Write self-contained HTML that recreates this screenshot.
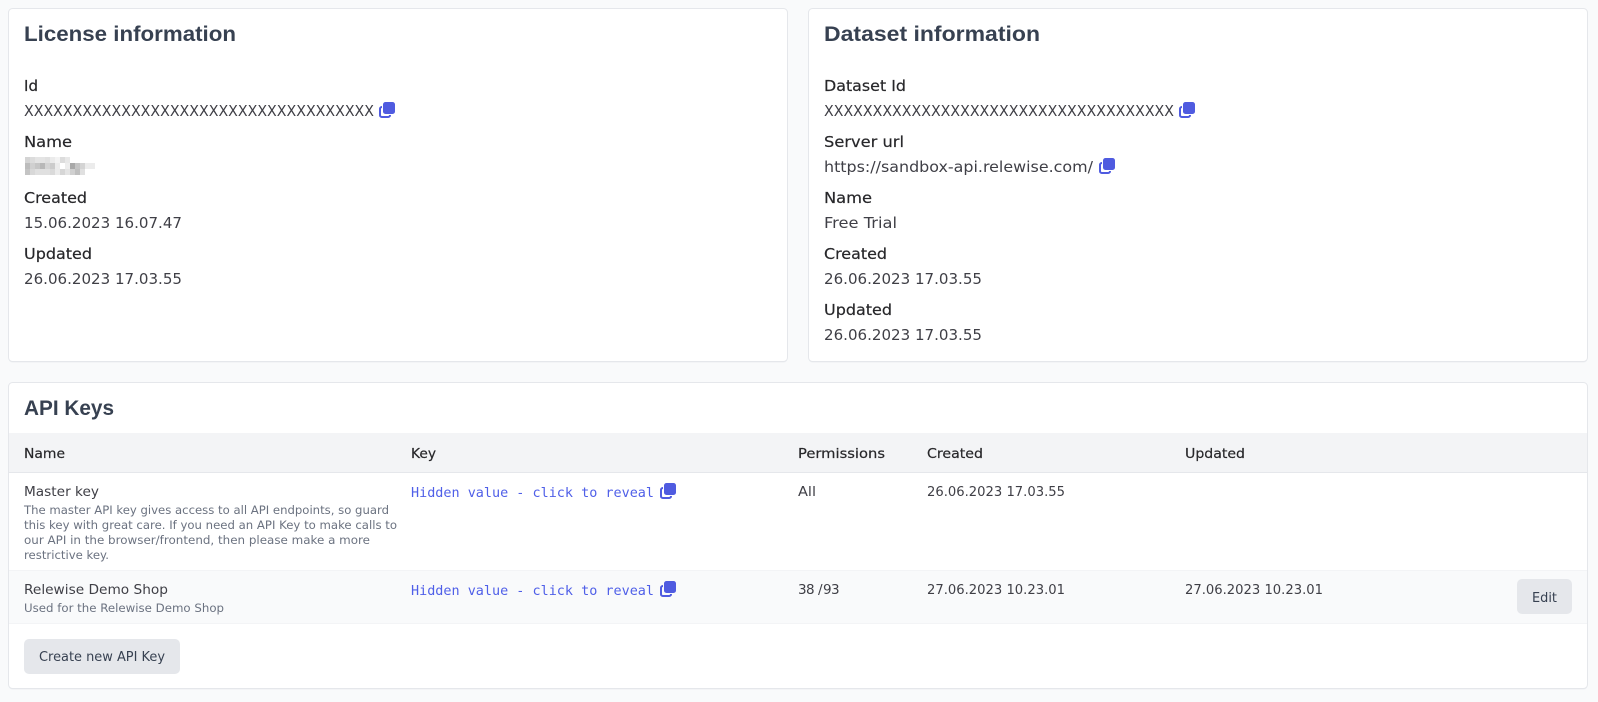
<!DOCTYPE html>
<html><head><meta charset="utf-8"><title>Settings</title>
<style>
html,body{margin:0;padding:0;background:#f9fafb;width:1598px;height:702px;overflow:hidden}
svg{display:block}
text{font-family:"DejaVu Sans","Liberation Sans",sans-serif;white-space:pre}
.h{font-family:"Liberation Sans",sans-serif;font-weight:700;font-size:21.5px;fill:#374151}
.l{font-size:15.5px;fill:#27272a;stroke:#27272a;stroke-width:.2}
.v{font-size:15.5px;fill:#3f3f46}
.th{font-size:13.5px;fill:#27272a;stroke:#27272a;stroke-width:.2}
.td{font-size:13.5px;fill:#3f3f46}
.d{font-size:11.5px;fill:#6b7280}
.m{font-family:"DejaVu Sans Mono","Liberation Mono",monospace;font-size:13.4px;fill:#4f5fe8}
.b{font-size:13.5px;fill:#374151}
.c{fill:#fff;stroke:#e5e7eb;stroke-width:1}
</style></head><body>
<svg width="1598" height="702" viewBox="0 0 1598 702" xmlns="http://www.w3.org/2000/svg">
<rect width="1598" height="702" fill="#f9fafb"/>
<rect x="8.5" y="9.5" width="779" height="353" rx="4" fill="#e5e7eb" opacity=".6"/>
<rect class="c" x="8.500" y="8.500" width="779" height="353" rx="4"/>
<rect x="808.500" y="9.500" width="779" height="353" rx="4" fill="#e5e7eb" opacity=".6"/>
<rect class="c" x="808.500" y="8.500" width="779" height="353" rx="4"/>
<rect x="8.500" y="383.500" width="1579" height="306" rx="4" fill="#e5e7eb" opacity=".6"/>
<rect class="c" x="8.500" y="382.500" width="1579" height="306" rx="4"/>

<text class="h" x="24" y="41" textLength="212" lengthAdjust="spacingAndGlyphs">License information</text>
<text class="l" x="24" y="91" textLength="14" lengthAdjust="spacingAndGlyphs">Id</text>
<text class="v" x="24" y="116" textLength="350" lengthAdjust="spacingAndGlyphs">XXXXXXXXXXXXXXXXXXXXXXXXXXXXXXXXXXXX</text>
<g transform="translate(379,102)"><rect x="4" y="0" width="12" height="12" rx="2.5" fill="#4f5be0"/><path d="M3 5H2.800A1.800 1.800 0 0 0 1 6.800V13.200A1.800 1.800 0 0 0 2.800 15H9.200A1.800 1.800 0 0 0 11 13.200V13" fill="none" stroke="#4f5be0" stroke-width="2"/></g>
<text class="l" x="24" y="147" textLength="48" lengthAdjust="spacingAndGlyphs">Name</text>
<g>
<rect x="25" y="157" width="5" height="6" fill="#d4d4d4"/><rect x="30" y="157" width="5" height="6" fill="#dcdcdc"/><rect x="35" y="157" width="10" height="6" fill="#e4e4e4"/><rect x="45" y="157" width="5" height="6" fill="#e0e0e0"/><rect x="50" y="157" width="5" height="6" fill="#ebebeb"/><rect x="55" y="157" width="5" height="6" fill="#f3f3f3"/><rect x="60" y="157" width="5" height="6" fill="#dcdcdc"/><rect x="65" y="157" width="5" height="6" fill="#e8e8e8"/>
<rect x="25" y="163" width="5" height="6" fill="#bcbcbc"/><rect x="30" y="163" width="5" height="6" fill="#d0d0d0"/><rect x="35" y="163" width="5" height="6" fill="#c6c6c6"/><rect x="40" y="163" width="5" height="6" fill="#b8b8b8"/><rect x="45" y="163" width="5" height="6" fill="#d4d4d4"/><rect x="50" y="163" width="5" height="6" fill="#cccccc"/><rect x="55" y="163" width="5" height="6" fill="#ececec"/><rect x="65" y="163" width="5" height="6" fill="#ededed"/><rect x="70" y="163" width="5" height="6" fill="#a9a9a9"/><rect x="75" y="163" width="5" height="6" fill="#c4c4c4"/><rect x="80" y="163" width="5" height="6" fill="#d4d4d4"/><rect x="85" y="163" width="10" height="6" fill="#ececec"/>
<rect x="25" y="169" width="5" height="6" fill="#c4c4c4"/><rect x="30" y="169" width="5" height="6" fill="#d8d8d8"/><rect x="35" y="169" width="15" height="6" fill="#e0e0e0"/><rect x="50" y="169" width="5" height="6" fill="#dadada"/><rect x="55" y="169" width="5" height="6" fill="#ebebeb"/><rect x="60" y="169" width="5" height="6" fill="#d6d6d6"/><rect x="65" y="169" width="5" height="6" fill="#e4e4e4"/><rect x="70" y="169" width="5" height="6" fill="#d0d0d0"/><rect x="75" y="169" width="5" height="6" fill="#bfbfbf"/><rect x="80" y="169" width="5" height="6" fill="#e0e0e0"/>
</g>
<text class="l" x="24" y="203" textLength="63" lengthAdjust="spacingAndGlyphs">Created</text>
<text class="v" x="24" y="228" textLength="158" lengthAdjust="spacingAndGlyphs">15.06.2023 16.07.47</text>
<text class="l" x="24" y="259" textLength="68" lengthAdjust="spacingAndGlyphs">Updated</text>
<text class="v" x="24" y="284" textLength="158" lengthAdjust="spacingAndGlyphs">26.06.2023 17.03.55</text>

<text class="h" x="824" y="41" textLength="216" lengthAdjust="spacingAndGlyphs">Dataset information</text>
<text class="l" x="824" y="91" textLength="82" lengthAdjust="spacingAndGlyphs">Dataset Id</text>
<text class="v" x="824" y="116" textLength="350" lengthAdjust="spacingAndGlyphs">XXXXXXXXXXXXXXXXXXXXXXXXXXXXXXXXXXXX</text>
<g transform="translate(1179,102)"><rect x="4" y="0" width="12" height="12" rx="2.5" fill="#4f5be0"/><path d="M3 5H2.800A1.800 1.800 0 0 0 1 6.800V13.200A1.800 1.800 0 0 0 2.800 15H9.200A1.800 1.800 0 0 0 11 13.200V13" fill="none" stroke="#4f5be0" stroke-width="2"/></g>
<text class="l" x="824" y="147" textLength="80" lengthAdjust="spacingAndGlyphs">Server url</text>
<text class="v" x="824" y="172" textLength="269" lengthAdjust="spacingAndGlyphs">https://sandbox-api.relewise.com/</text>
<g transform="translate(1099,158)"><rect x="4" y="0" width="12" height="12" rx="2.5" fill="#4f5be0"/><path d="M3 5H2.800A1.800 1.800 0 0 0 1 6.800V13.200A1.800 1.800 0 0 0 2.800 15H9.200A1.800 1.800 0 0 0 11 13.200V13" fill="none" stroke="#4f5be0" stroke-width="2"/></g>
<text class="l" x="824" y="203" textLength="48" lengthAdjust="spacingAndGlyphs">Name</text>
<text class="v" x="824" y="228" textLength="73" lengthAdjust="spacingAndGlyphs">Free Trial</text>
<text class="l" x="824" y="259" textLength="63" lengthAdjust="spacingAndGlyphs">Created</text>
<text class="v" x="824" y="284" textLength="158" lengthAdjust="spacingAndGlyphs">26.06.2023 17.03.55</text>
<text class="l" x="824" y="315" textLength="68" lengthAdjust="spacingAndGlyphs">Updated</text>
<text class="v" x="824" y="340" textLength="158" lengthAdjust="spacingAndGlyphs">26.06.2023 17.03.55</text>

<text class="h" x="24" y="415" textLength="90" lengthAdjust="spacingAndGlyphs">API Keys</text>

<rect x="9" y="433" width="1578" height="39" fill="#f3f4f6"/>
<rect x="9" y="472" width="1578" height="1" fill="#e5e7eb"/>
<text class="th" x="24" y="458" textLength="41" lengthAdjust="spacingAndGlyphs">Name</text>
<text class="th" x="411" y="458" textLength="25" lengthAdjust="spacingAndGlyphs">Key</text>
<text class="th" x="798" y="458" textLength="87" lengthAdjust="spacingAndGlyphs">Permissions</text>
<text class="th" x="927" y="458" textLength="56" lengthAdjust="spacingAndGlyphs">Created</text>
<text class="th" x="1185" y="458" textLength="60" lengthAdjust="spacingAndGlyphs">Updated</text>

<text class="td" x="24" y="496" textLength="75" lengthAdjust="spacingAndGlyphs">Master key</text>
<text class="d" x="24" y="514" textLength="365" lengthAdjust="spacingAndGlyphs">The master API key gives access to all API endpoints, so guard</text>
<text class="d" x="24" y="529" textLength="373" lengthAdjust="spacingAndGlyphs">this key with great care. If you need an API Key to make calls to</text>
<text class="d" x="24" y="544" textLength="346" lengthAdjust="spacingAndGlyphs">our API in the browser/frontend, then please make a more</text>
<text class="d" x="24" y="559" textLength="85" lengthAdjust="spacingAndGlyphs">restrictive key.</text>
<text class="m" x="411" y="497" textLength="243" lengthAdjust="spacingAndGlyphs">Hidden value - click to reveal</text>
<g transform="translate(660,483)"><rect x="4" y="0" width="12" height="12" rx="2.5" fill="#4f5be0"/><path d="M3 5H2.800A1.800 1.800 0 0 0 1 6.800V13.200A1.800 1.800 0 0 0 2.800 15H9.200A1.800 1.800 0 0 0 11 13.200V13" fill="none" stroke="#4f5be0" stroke-width="2"/></g>
<text class="td" x="798" y="496" textLength="18" lengthAdjust="spacingAndGlyphs">All</text>
<text class="td" x="927" y="496" textLength="138" lengthAdjust="spacingAndGlyphs">26.06.2023 17.03.55</text>

<rect x="9" y="570" width="1578" height="53" fill="#f9fafb"/>
<rect x="9" y="570" width="1578" height="1" fill="#f3f4f6"/>
<rect x="9" y="623" width="1578" height="1" fill="#f3f4f6"/>
<text class="td" x="24" y="594" textLength="144" lengthAdjust="spacingAndGlyphs">Relewise Demo Shop</text>
<text class="d" x="24" y="612" textLength="200" lengthAdjust="spacingAndGlyphs">Used for the Relewise Demo Shop</text>
<text class="m" x="411" y="595" textLength="243" lengthAdjust="spacingAndGlyphs">Hidden value - click to reveal</text>
<g transform="translate(660,581)"><rect x="4" y="0" width="12" height="12" rx="2.5" fill="#4f5be0"/><path d="M3 5H2.800A1.800 1.800 0 0 0 1 6.800V13.200A1.800 1.800 0 0 0 2.800 15H9.200A1.800 1.800 0 0 0 11 13.200V13" fill="none" stroke="#4f5be0" stroke-width="2"/></g>
<text class="td" y="594"><tspan x="798">3</tspan><tspan x="806">8</tspan> <tspan x="818">/</tspan> <tspan x="823">9</tspan><tspan x="831">3</tspan></text>
<text class="td" x="927" y="594" textLength="138" lengthAdjust="spacingAndGlyphs">27.06.2023 10.23.01</text>
<text class="td" x="1185" y="594" textLength="138" lengthAdjust="spacingAndGlyphs">27.06.2023 10.23.01</text>
<rect x="1517" y="579" width="55" height="35" rx="5" fill="#e5e7eb"/>
<text class="b" x="1532" y="602" textLength="25" lengthAdjust="spacingAndGlyphs">Edit</text>

<rect x="24" y="639" width="156" height="35" rx="5" fill="#e5e7eb"/>
<text class="b" x="39" y="661" textLength="126" lengthAdjust="spacingAndGlyphs">Create new API Key</text>
</svg>
</body></html>
